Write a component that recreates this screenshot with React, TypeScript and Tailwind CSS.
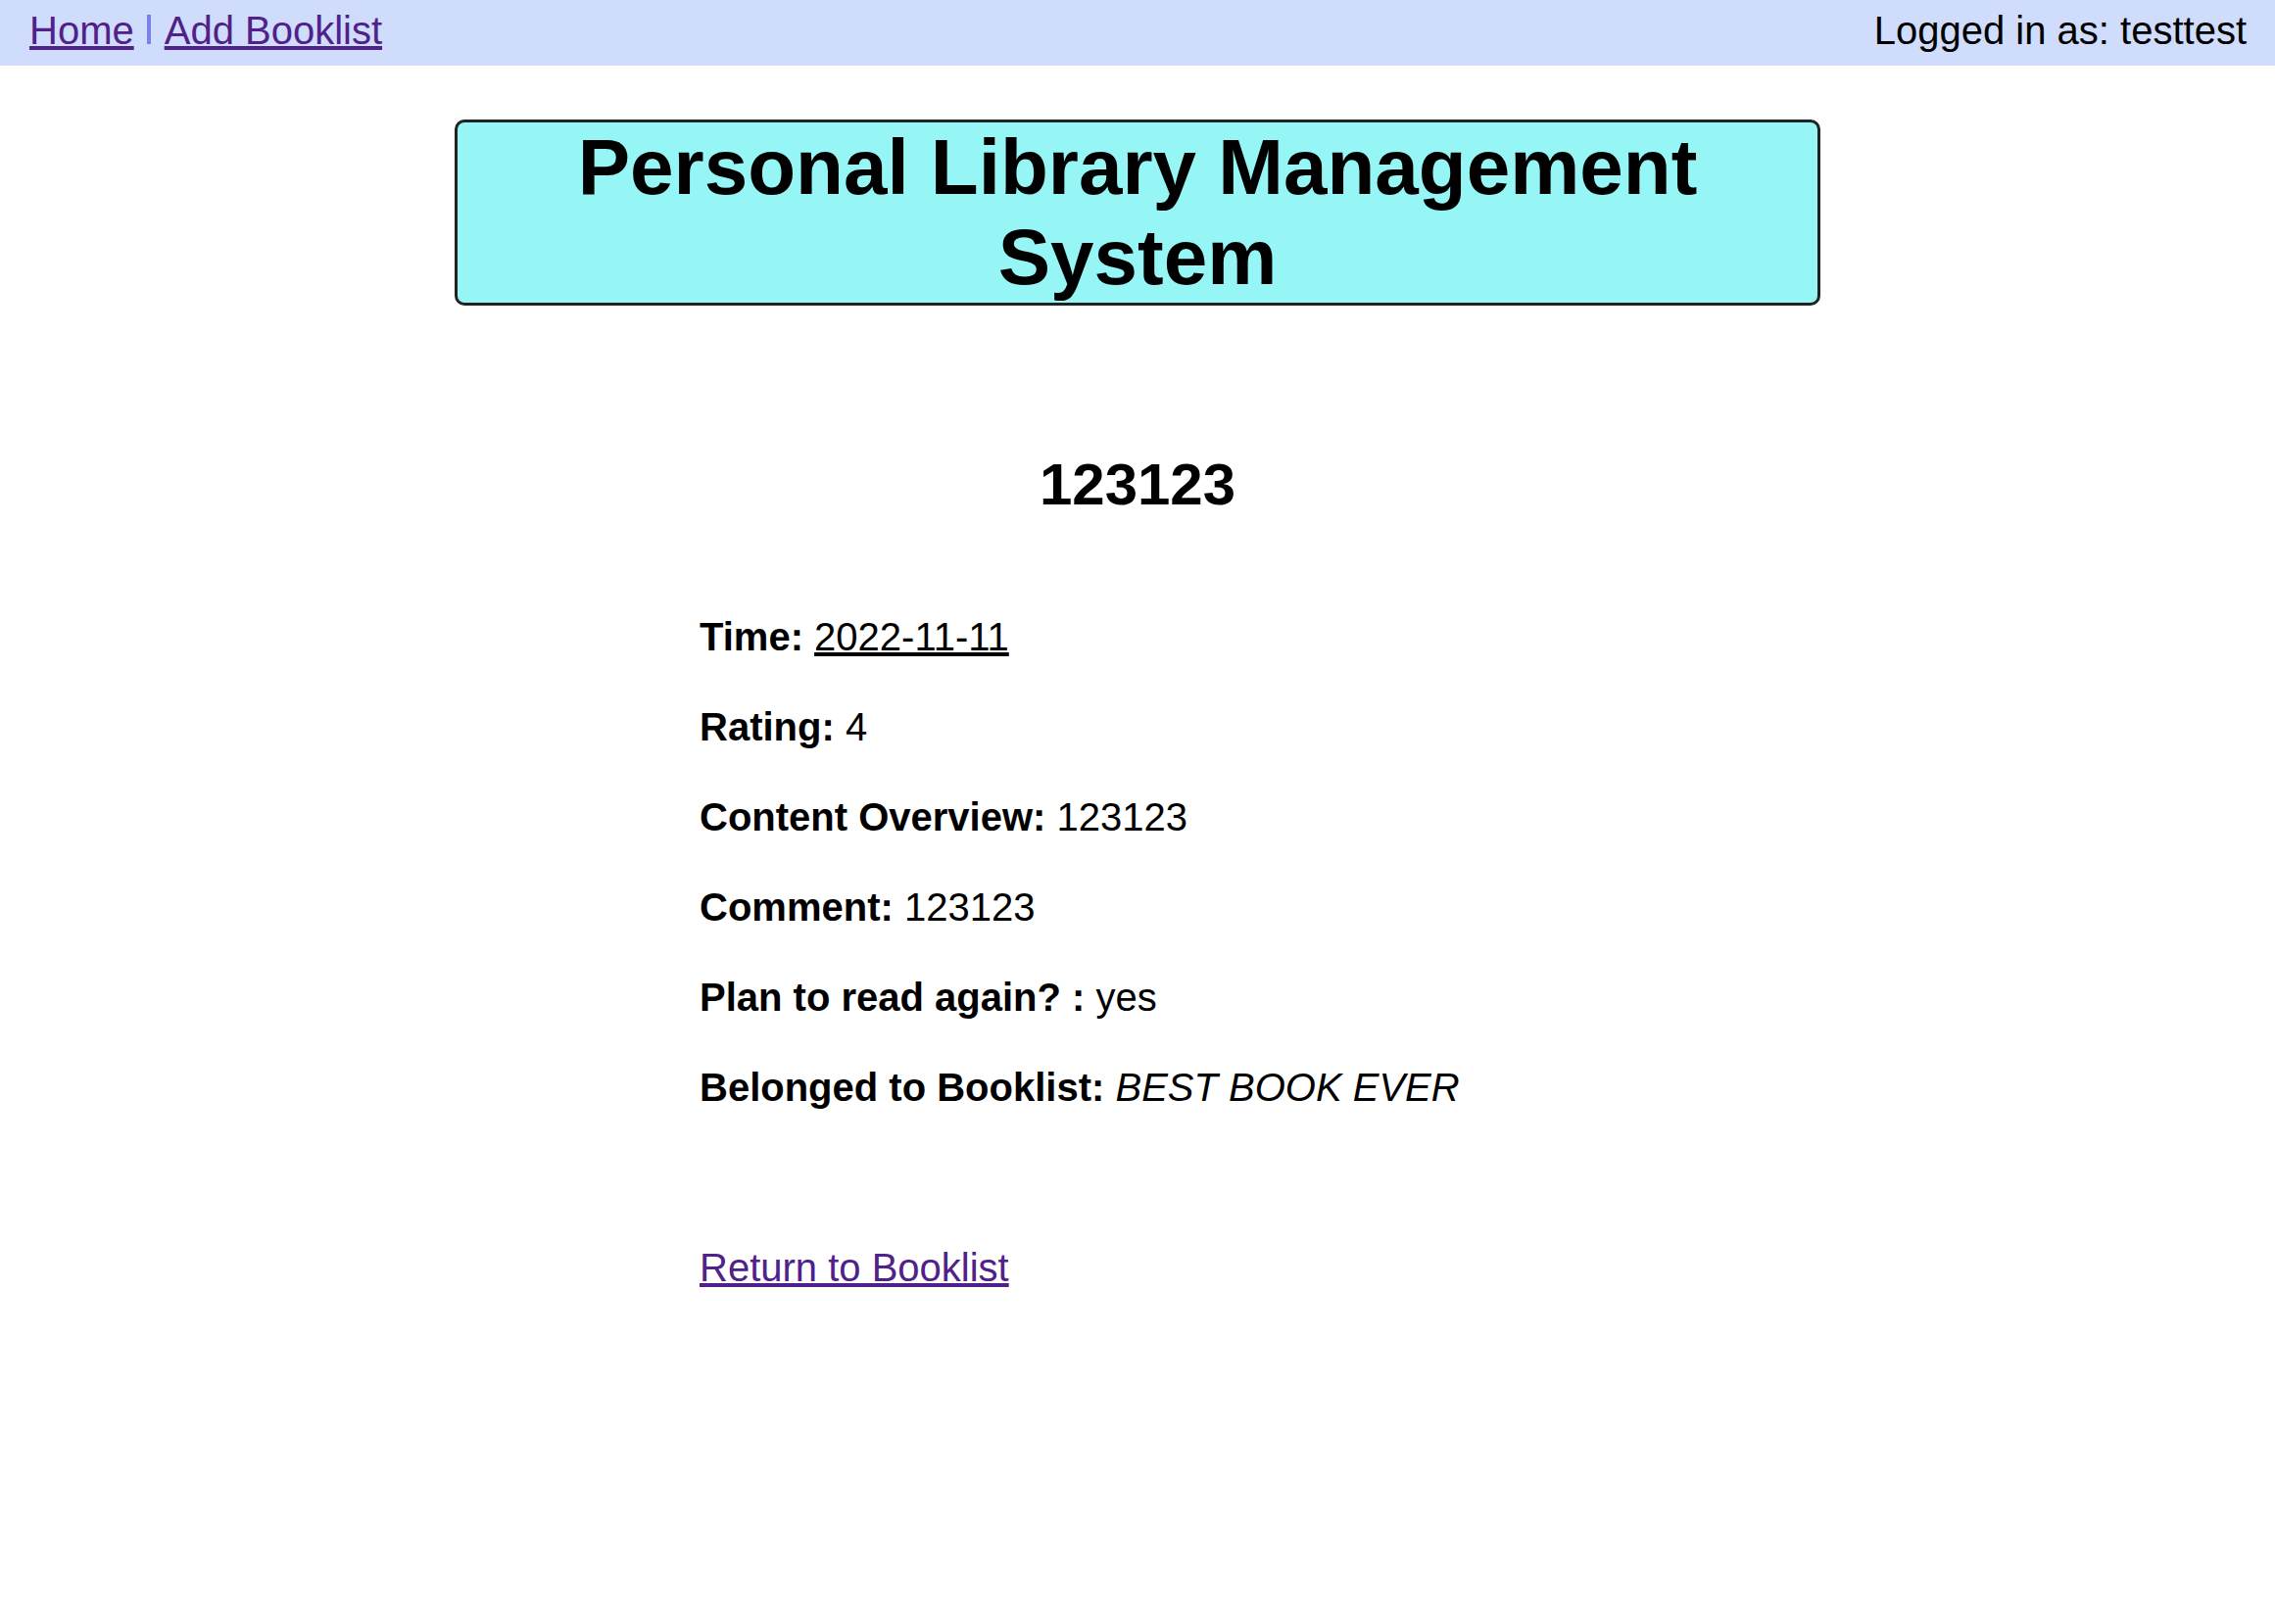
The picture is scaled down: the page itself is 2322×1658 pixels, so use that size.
import React from "react"

const details = [
  { label: "Time:", value: "2022-11-11", kind: "date" },
  { label: "Rating:", value: "4", kind: "plain" },
  { label: "Content Overview:", value: "123123", kind: "plain" },
  { label: "Comment:", value: "123123", kind: "plain" },
  { label: "Plan to read again? :", value: "yes", kind: "plain" },
  { label: "Belonged to Booklist:", value: "BEST BOOK EVER", kind: "italic" },
]

const App: React.FC = () => {
  return (
    <div className="min-h-screen bg-white font-['Liberation_Sans',Arial,Helvetica,sans-serif] text-[40px] leading-[46px] text-black">
      <nav className="flex h-[67px] items-start justify-between bg-[#cfdcfb] pl-[30px] pr-[29px] pt-[8px]">
        <div className="flex items-start">
          <a href="#" className="text-[#4f2189] underline">
            Home
          </a>
          <span className="ml-[13px] mr-[14px] mt-[7px] inline-block h-[30px] w-[4px] bg-[#7f7fe8]"></span>
          <a href="#" className="text-[#4f2189] underline">
            Add Booklist
          </a>
        </div>
        <div>Logged in as: testtest</div>
      </nav>

      <div className="mx-auto mt-[55px] w-[1394px] rounded-[10px] border-[3px] border-[#222222] bg-[#96f6f6]">
        <h1 className="text-center text-[80px] font-bold leading-[92px]">Personal Library Management System</h1>
      </div>

      <h2 className="mt-[148px] text-center text-[60px] font-bold leading-[69px]">123123</h2>

      <div className="mx-auto mt-[98px] w-[894px]">
        <div className="flex flex-col gap-[46px]">
          {details.map((item) => (
            <p key={item.label}>
              <b>{item.label}</b>{" "}
              {item.kind === "date" ? (
                <span className="underline">{item.value}</span>
              ) : item.kind === "italic" ? (
                <i>{item.value}</i>
              ) : (
                <span>{item.value}</span>
              )}
            </p>
          ))}
        </div>

        <div className="mt-[138px] pb-[100px]">
          <a href="#" className="text-[#4f2189] underline">
            Return to Booklist
          </a>
        </div>
      </div>
    </div>
  )
}

export default App
